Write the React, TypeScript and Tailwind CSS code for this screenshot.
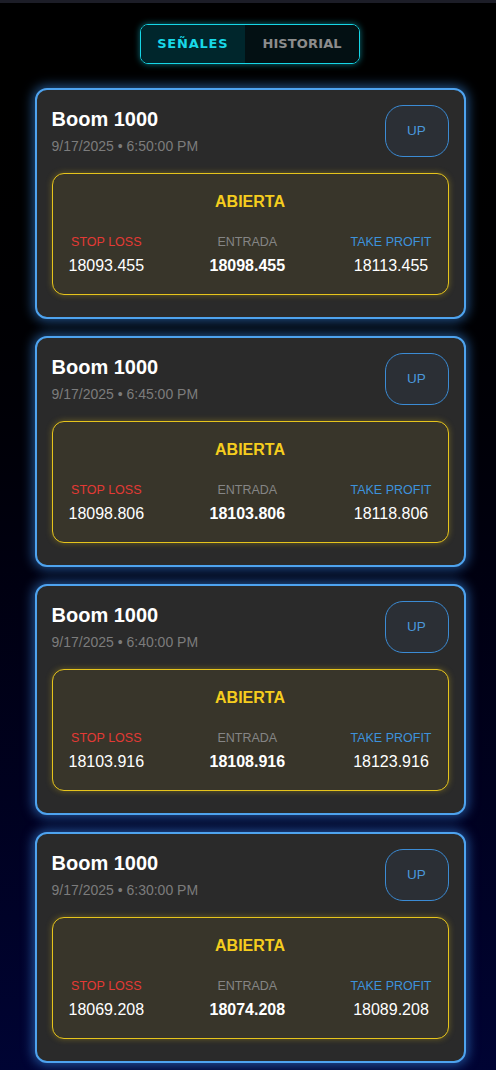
import React from "react";

type Signal = {
  date: string;
  sl: string;
  entry: string;
  tp: string;
};

const signals: Signal[] = [
  { date: "9/17/2025 • 6:50:00 PM", sl: "18093.455", entry: "18098.455", tp: "18113.455" },
  { date: "9/17/2025 • 6:45:00 PM", sl: "18098.806", entry: "18103.806", tp: "18118.806" },
  { date: "9/17/2025 • 6:40:00 PM", sl: "18103.916", entry: "18108.916", tp: "18123.916" },
  { date: "9/17/2025 • 6:30:00 PM", sl: "18069.208", entry: "18074.208", tp: "18089.208" },
];

function Card({ s }: { s: Signal }) {
  return (
    <div className="w-[431px] rounded-[12px] border-2 border-[#4ea3ef] bg-[#2a2a2a] px-[15px] pt-[15px] pb-[22px] shadow-[0_0_12px_2px_rgba(59,140,230,0.6)]">
      <div className="flex items-start justify-between">
        <div className="flex flex-col">
          <div className="text-[20px] font-bold leading-[28px] text-white">Boom 1000</div>
          <div className="mt-[3px] text-[14px] leading-[20px] text-[#7c7c7c]">{s.date}</div>
        </div>
        <div className="flex h-[52px] w-[64px] items-center justify-center rounded-[18px] border border-[#3b8bd4] bg-[#2b2f35] text-[13.5px] text-[#4a98dc]">
          UP
        </div>
      </div>
      <div className="mt-4 rounded-[12px] border border-[#e6c41c] bg-[#38352a] px-4 pt-4 pb-4 shadow-[0_0_6px_rgba(230,196,28,0.35)]">
        <div className="text-center text-[16px] font-bold leading-[24px] text-[#f5cd1e]">ABIERTA</div>
        <div className="mt-5 flex justify-between">
          <div className="flex flex-col items-center">
            <div className="text-[12.5px] leading-[16px] text-[#e33a35]">STOP LOSS</div>
            <div className="mt-1 text-[16px] leading-[24px] text-white">{s.sl}</div>
          </div>
          <div className="flex flex-col items-center">
            <div className="text-[12.5px] leading-[16px] text-[#858585]">ENTRADA</div>
            <div className="mt-1 text-[16px] font-bold leading-[24px] text-white">{s.entry}</div>
          </div>
          <div className="flex flex-col items-center">
            <div className="text-[12.5px] leading-[16px] text-[#3d92dc]">TAKE PROFIT</div>
            <div className="mt-1 text-[16px] leading-[24px] text-white">{s.tp}</div>
          </div>
        </div>
      </div>
    </div>
  );
}

export default function App() {
  return (
    <div
      className="min-h-screen w-full bg-gradient-to-b from-[#000000] via-[#00000e] to-[#000434] pb-4"
      style={{ fontFamily: '"Liberation Sans", Arial, sans-serif' }}
    >
      <div className="h-[3px] w-full bg-[#1c1d27]" />
      <div className="pl-[4px]">
        <div className="flex justify-center pt-[21px]">
          <div className="flex h-[40px] overflow-hidden rounded-[8px] border border-[#16d6e6] shadow-[0_0_6px_rgba(20,210,230,0.55)]">
            <div className="flex items-center bg-[#00262c] pl-4 pr-[17px] text-[13px] font-bold tracking-[0.06em] text-[#18d8e8]" style={{ fontFamily: '"DejaVu Sans", sans-serif' }}>
              SEÑALES
            </div>
            <div className="flex items-center bg-[#031013] px-[17px] text-[13px] font-bold tracking-[0.01em] text-[#8c8c8c]" style={{ fontFamily: '"DejaVu Sans", sans-serif' }}>
              HISTORIAL
            </div>
          </div>
        </div>
        <div className="mt-[24px] flex flex-col items-center gap-[17px]">
          {signals.map((s, i) => (
            <Card key={i} s={s} />
          ))}
        </div>
      </div>
    </div>
  );
}
